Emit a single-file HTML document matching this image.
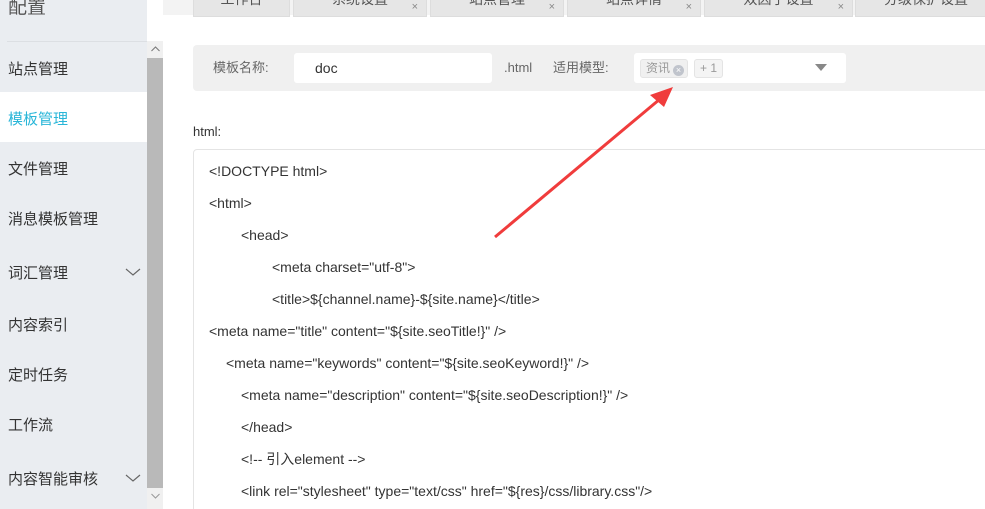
<!DOCTYPE html>
<html style="overflow:hidden;height:509px"><head><meta charset="utf-8"><style>
body{margin:0;width:985px;height:509px;overflow:hidden;background:#fff;font-family:"Liberation Sans","Noto Sans CJK SC",sans-serif;position:relative}
.a{position:absolute}
.side{left:0;top:0;width:147px;height:509px;background:#eaedf1}
.mi{position:absolute;left:8px;font-size:15px;color:#333;line-height:20px}
.sb{left:147px;top:41px;width:16px;height:468px;background:#f0f0f0}
.tab{position:absolute;top:-12px;height:27px;background:#e6e6e6;border:1px solid #ddd;font-size:14px;color:#555;text-align:center;line-height:20px}
.tab i{position:absolute;right:8px;top:8px;font-style:normal;font-size:11px;color:#888}
.code{left:193px;top:149px;width:800px;height:370px;border:1px solid #e4e4e4;border-radius:4px}
.l{position:absolute;font-size:14px;color:#333;white-space:pre;line-height:16px}
.lb{position:absolute;font-size:13px;color:#666;line-height:16px}
</style></head><body>
<div class="a side">
<div class="mi" style="top:-4px;font-size:19px;color:#555;line-height:24px">配置</div>
<div class="a" style="left:7px;top:41px;width:140px;height:1px;background:#dcdfe3"></div>
<div class="mi" style="top:60px">站点管理</div>
<div class="a" style="left:0;top:92px;width:147px;height:50px;background:#fff"></div>
<div class="mi" style="top:110px;color:#29b6d8">模板管理</div>
<div class="mi" style="top:160px">文件管理</div>
<div class="mi" style="top:210px">消息模板管理</div>
<div class="mi" style="top:264px">词汇管理</div>
<div class="mi" style="top:316px">内容索引</div>
<div class="mi" style="top:366px">定时任务</div>
<div class="mi" style="top:416px">工作流</div>
<div class="mi" style="top:470px">内容智能审核</div>
<svg class="a" style="left:125px;top:267px" width="16" height="10"><path d="M1 2 L8 8 L15 2" stroke="#666" fill="none" stroke-width="1.2"/></svg>
<svg class="a" style="left:125px;top:473px" width="16" height="10"><path d="M1 2 L8 8 L15 2" stroke="#666" fill="none" stroke-width="1.2"/></svg>
</div>
<div class="a sb"><div class="a" style="left:0;top:17px;width:16px;height:430px;background:#b9b9b9"></div>
<svg class="a" style="left:4px;top:5px" width="9" height="6"><path d="M0.5 5 L4.5 1 L8.5 5" stroke="#777" fill="none"/></svg>
<svg class="a" style="left:4px;top:452px" width="9" height="6"><path d="M0.5 1 L4.5 5 L8.5 1" stroke="#999" fill="none"/></svg></div>
<div class="a" style="left:163px;top:0;width:822px;height:15px;background:#f3f3f3"></div>
<div class="tab" style="left:193px;width:95px">工作台</div>
<div class="tab" style="left:293px;width:132px">系统设置<i>×</i></div>
<div class="tab" style="left:430px;width:132px">站点管理<i>×</i></div>
<div class="tab" style="left:567px;width:132px">站点详情<i>×</i></div>
<div class="tab" style="left:704px;width:147px">双因子设置<i>×</i></div>
<div class="tab" style="left:855px;width:140px">分级保护设置</div>
<div class="a" style="left:193px;top:45px;width:800px;height:46px;background:#f0f0f0;border-radius:4px"></div>
<div class="lb" style="left:213px;top:60px">模板名称:</div>
<div class="a" style="left:294px;top:53px;width:198px;height:30px;background:#fff;border-radius:3px"></div>
<div class="a" style="left:315px;top:60px;font-size:14px;color:#333;line-height:16px">doc</div>
<div class="lb" style="left:504px;top:60px">.html</div>
<div class="lb" style="left:553px;top:60px">适用模型:</div>
<div class="a" style="left:634px;top:53px;width:212px;height:30px;background:#fff;border-radius:3px"></div>
<div class="a" style="left:640px;top:59px;width:48px;height:19px;background:#f0f0f0;border:1px solid #e4e4e4;border-radius:3px;font-size:12px;color:#999;line-height:17px;padding-left:5px;box-sizing:border-box">资讯<span style="display:inline-block;width:11px;height:11px;border-radius:50%;background:#c0c4cc;color:#fff;font-size:9px;line-height:11px;text-align:center;margin-left:3px;vertical-align:-1px">×</span></div>
<div class="a" style="left:694px;top:59px;width:29px;height:19px;background:#f4f4f4;border:1px solid #e4e4e4;border-radius:3px;font-size:12px;color:#999;line-height:17px;text-align:center;box-sizing:border-box">+ 1</div>
<svg class="a" style="left:815px;top:64px" width="12" height="8"><path d="M0 0 L12 0 L6 7Z" fill="#888"/></svg>
<div class="lb" style="left:193px;top:124px;color:#333">html:</div>
<div class="a code"></div>
<div class="l" style="left:209px;top:163px">&lt;!DOCTYPE html&gt;</div>
<div class="l" style="left:209px;top:195px">&lt;html&gt;</div>
<div class="l" style="left:241px;top:227px">&lt;head&gt;</div>
<div class="l" style="left:272px;top:259px">&lt;meta charset="utf-8"&gt;</div>
<div class="l" style="left:272px;top:291px">&lt;title&gt;${channel.name}-${site.name}&lt;/title&gt;</div>
<div class="l" style="left:209px;top:323px">&lt;meta name="title" content="${site.seoTitle!}" /&gt;</div>
<div class="l" style="left:226px;top:355px">&lt;meta name="keywords" content="${site.seoKeyword!}" /&gt;</div>
<div class="l" style="left:241px;top:387px">&lt;meta name="description" content="${site.seoDescription!}" /&gt;</div>
<div class="l" style="left:241px;top:419px">&lt;/head&gt;</div>
<div class="l" style="left:241px;top:451px">&lt;!-- 引入element --&gt;</div>
<div class="l" style="left:241px;top:483px">&lt;link rel="stylesheet" type="text/css" href="${res}/css/library.css"/&gt;</div>
<svg class="a" style="left:0;top:0" width="985" height="509"><path d="M495 237 L660 99" stroke="#f03c3c" stroke-width="3"/><path d="M673 87 L650 95 L664 107Z" fill="#f03c3c"/></svg>
</body></html>
